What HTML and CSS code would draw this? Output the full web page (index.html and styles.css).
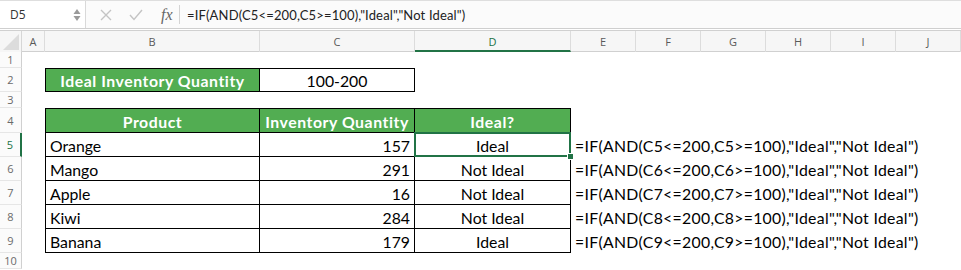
FILE: index.html
```html
<!DOCTYPE html>
<html lang="en">
  <head>
    <meta charset="UTF-8" />
    <meta name="viewport" content="width=device-width, initial-scale=1.0" />
    <title>Ideal Inventory</title>
    <link rel="stylesheet" href="styles.css">
  </head>
  <body>
    <div class="formula-bar">
      <div class="name-box">
        <span>D5</span>
        <span class="spin">
          <svg width="8" height="14" viewBox="0 0 8 14"><path d="M4 1 L7.5 6 L0.5 6 Z" fill="#9a9a9a"/><path d="M4 13 L7.5 8 L0.5 8 Z" fill="#9a9a9a"/></svg>
        </span>
      </div>
      <div class="bar-icons">
        <svg class="ico" width="12" height="12" viewBox="0 0 12 12"><path d="M1 1 L11 11 M11 1 L1 11" stroke="#c4c4c4" stroke-width="1.4"/></svg>
        <svg class="ico" width="14" height="12" viewBox="0 0 14 12"><path d="M1 6 L5 10.5 L13 1" fill="none" stroke="#c4c4c4" stroke-width="1.4"/></svg>
        <span class="fx">fx</span>
      </div>
      <div class="formula-text">=IF(AND(C5&lt;=200,C5&gt;=100),"Ideal","Not Ideal")</div>
    </div>

    <div class="sheet">
      <div class="row col-heads">
        <div class="corner"><svg width="22" height="21" viewBox="0 0 22 21"><path d="M19 3 L19 19 L3 19 Z" fill="#dcdcdc"/></svg></div>
        <div class="ch">A</div>
        <div class="ch">B</div>
        <div class="ch">C</div>
        <div class="ch active">D</div>
        <div class="ch">E</div>
        <div class="ch">F</div>
        <div class="ch">G</div>
        <div class="ch">H</div>
        <div class="ch">I</div>
        <div class="ch">J</div>
      </div>

      <div class="row thin"><div class="rh">1</div></div>

      <div class="row">
        <div class="rh">2</div>
        <div></div>
        <div class="cell box top left head">Ideal Inventory Quantity</div>
        <div class="cell box top center">100-200</div>
      </div>

      <div class="row thin"><div class="rh">3</div></div>

      <div class="row tall">
        <div class="rh">4</div>
        <div></div>
        <div class="cell box top left head">Product</div>
        <div class="cell box top head">Inventory Quantity</div>
        <div class="cell box top head">Ideal?</div>
      </div>

      <div class="row">
        <div class="rh active">5</div>
        <div></div>
        <div class="cell box left">Orange</div>
        <div class="cell box right">157</div>
        <div class="cell box center selected">Ideal<span class="sel"><span class="handle"></span></span></div>
        <div class="cell formula">=IF(AND(C5&lt;=200,C5&gt;=100),"Ideal","Not Ideal")</div>
      </div>

      <div class="row">
        <div class="rh">6</div>
        <div></div>
        <div class="cell box left">Mango</div>
        <div class="cell box right">291</div>
        <div class="cell box center">Not Ideal</div>
        <div class="cell formula">=IF(AND(C6&lt;=200,C6&gt;=100),"Ideal","Not Ideal")</div>
      </div>

      <div class="row">
        <div class="rh">7</div>
        <div></div>
        <div class="cell box left">Apple</div>
        <div class="cell box right">16</div>
        <div class="cell box center">Not Ideal</div>
        <div class="cell formula">=IF(AND(C7&lt;=200,C7&gt;=100),"Ideal","Not Ideal")</div>
      </div>

      <div class="row">
        <div class="rh">8</div>
        <div></div>
        <div class="cell box left">Kiwi</div>
        <div class="cell box right">284</div>
        <div class="cell box center">Not Ideal</div>
        <div class="cell formula">=IF(AND(C8&lt;=200,C8&gt;=100),"Ideal","Not Ideal")</div>
      </div>

      <div class="row">
        <div class="rh">9</div>
        <div></div>
        <div class="cell box left">Banana</div>
        <div class="cell box right">179</div>
        <div class="cell box center">Ideal</div>
        <div class="cell formula">=IF(AND(C9&lt;=200,C9&gt;=100),"Ideal","Not Ideal")</div>
      </div>

      <div class="row thin"><div class="rh">10</div></div>
    </div>
  </body>
</html>
```

FILE: styles.css
```css
* {
  box-sizing: border-box;
}

body {
  margin: 0;
  background-color: #fff;
  font-family: Lato, "Liberation Sans", sans-serif;
  overflow: hidden;
}

/* barra de fórmulas */
.formula-bar {
  height: 29px;
  display: flex;
  align-items: center;
  border-top: 1px solid #dedede;
  border-bottom: 1px solid #cfcfcf;
  background-color: #fbfbfb;
  margin-bottom: 1px;
}

.name-box {
  width: 86px;
  height: 100%;
  display: flex;
  align-items: center;
  justify-content: space-between;
  padding: 0 4px 0 10px;
  background-color: #fff;
  border-right: 1px solid #d9d9d9;
  font-family: "Open Sans", sans-serif;
  font-size: 12px;
  color: #333;
}

.spin {
  display: flex;
}

.bar-icons {
  width: 94px;
  height: 19px;
  display: flex;
  align-items: center;
  padding-left: 14px;
  gap: 17px;
  border-right: 1px solid #d4d4d4;
}

.fx {
  font-family: "Liberation Serif", serif;
  font-style: italic;
  font-size: 16px;
  color: #666;
  margin-left: 1px;
}

.formula-text {
  padding-left: 7px;
  font-size: 13px;
  letter-spacing: 0.15px;
  color: #222;
}

/* planilha */
.row {
  display: grid;
  grid-template-columns: 22px 23px 215px 155px 156px repeat(6, 65px);
  height: 24px;
}

.row.thin {
  height: 16px;
}

.row.tall {
  height: 25px;
}

.col-heads {
  height: 22px;
  border-top: 1px solid #d0d0d0;
  border-bottom: 1px solid #d0d0d0;
  background-color: #f6f6f6;
}

.corner {
  border-right: 1px solid #d6d6d6;
  background-color: #f6f6f6;
}

.corner svg {
  display: block;
}

.ch {
  display: flex;
  align-items: center;
  justify-content: center;
  border-right: 1px solid #dcdcdc;
  font-family: "Open Sans", sans-serif;
  font-size: 11px;
  color: #5a5a5a;
}

.ch.active {
  color: #217346;
  border-bottom: 2px solid #217346;
  padding-top: 2px;
}

.rh {
  display: flex;
  align-items: center;
  justify-content: center;
  border-right: 1px solid #d0d0d0;
  border-bottom: 1px solid #e6e6e6;
  background-color: #fbfbfb;
  font-family: "Open Sans", sans-serif;
  font-size: 11px;
  color: #6a6a6a;
}

.rh.active {
  color: #217346;
  border-right: 2px solid #217346;
}

.cell {
  display: flex;
  align-items: center;
  padding: 1px 4px 0;
  font-size: 15.8px;
  color: #000;
  white-space: nowrap;
}

.box {
  border-right: 1px solid #000;
  border-bottom: 1px solid #000;
}

.box.top {
  border-top: 1px solid #000;
}

.box.left {
  border-left: 1px solid #000;
}

.head {
  justify-content: center;
  background-color: #52ad52;
  color: #fff;
  font-weight: bold;
  letter-spacing: 0.55px;
}

.center {
  justify-content: center;
}

.right {
  justify-content: flex-end;
}

.formula {
  grid-column: span 6;
  padding-left: 4px;
  letter-spacing: 0.3px;
}

/* célula ativa */
.selected {
  position: relative;
}

.sel {
  position: absolute;
  left: -1px;
  top: -1px;
  right: -1px;
  bottom: -1px;
  border: 2px solid #217346;
}

.handle {
  position: absolute;
  right: -5px;
  bottom: -5px;
  width: 7px;
  height: 7px;
  background-color: #217346;
  border: 1px solid #fff;
}
```
